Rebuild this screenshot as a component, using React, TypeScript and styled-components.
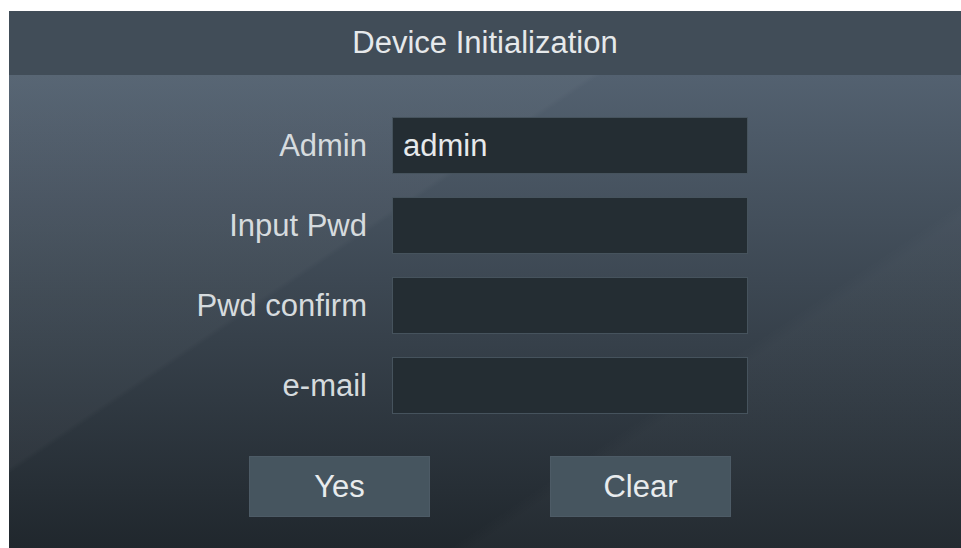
import React, { useState } from 'react';
import styled, { createGlobalStyle } from 'styled-components';

const GlobalStyle = createGlobalStyle`
  html,
  body {
    margin: 0;
    padding: 0;
    background: #ffffff;
    overflow: hidden;
  }
  body {
    font-family: 'Liberation Sans', Arial, sans-serif;
  }
`;

const StyledPanel = styled.div`
  margin: 11px 0 0 9px;
  height: 537px;
  display: flex;
  flex-direction: column;
`;

const StyledHeader = styled.div`
  height: 64px;
  flex-shrink: 0;
  display: flex;
  align-items: center;
  justify-content: center;
  background-color: #414d58;
  color: #e6e9eb;
  font-size: 31px;
`;

const StyledBody = styled.div`
  flex: 1;
  padding-top: 42px;
  box-sizing: border-box;
  /* angled sheen on top of the dark vertical fade */
  background:
    linear-gradient(
      146deg,
      rgba(255, 255, 255, 0.03) 0%,
      rgba(255, 255, 255, 0.03) 35.2%,
      rgba(255, 255, 255, 0) 35.8%,
      rgba(255, 255, 255, 0) 69%,
      rgba(255, 255, 255, 0.02) 70.5%
    ),
    linear-gradient(to bottom, #536170 0%, #20272d 100%);
`;

const StyledForm = styled.div`
  display: grid;
  grid-template-columns: 358px 356px;
  grid-auto-rows: 57px;
  column-gap: 25px;
  row-gap: 23px;
`;

const StyledLabel = styled.label`
  display: flex;
  align-items: center;
  justify-content: flex-end;
  color: #d6dbde;
  font-size: 31px;
  white-space: nowrap;
`;

const StyledInput = styled.input`
  box-sizing: border-box;
  width: 100%;
  height: 100%;
  margin: 0;
  padding: 0 10px;
  border: 1px solid #46535d;
  background-color: #242d33;
  color: #e6e9eb;
  font-family: 'Liberation Sans', Arial, sans-serif;
  font-size: 31px;
  outline: none;
`;

const StyledButtons = styled.div`
  display: flex;
  gap: 120px;
  padding-left: 240px;
  margin-top: 42px;
`;

const StyledButton = styled.button`
  width: 181px;
  height: 61px;
  margin: 0;
  padding: 0;
  border: 1px solid #4d5b66;
  background-color: #46555f;
  color: #e8ebed;
  font-family: 'Liberation Sans', Arial, sans-serif;
  font-size: 31px;
  cursor: pointer;
  &:hover {
    background-color: #50606b;
  }
`;

const fields = [
  { key: 'admin', label: 'Admin', type: 'text' },
  { key: 'pwd', label: 'Input Pwd', type: 'password' },
  { key: 'confirm', label: 'Pwd confirm', type: 'password' },
  { key: 'email', label: 'e-mail', type: 'text' },
];

const initial = { admin: 'admin', pwd: '', confirm: '', email: '' };

const App = () => {
  const [values, setValues] = useState<Record<string, string>>(initial);

  return (
    <>
      <GlobalStyle />
      <StyledPanel>
        <StyledHeader>Device Initialization</StyledHeader>
        <StyledBody>
          <StyledForm>
            {fields.map((f) => (
              <React.Fragment key={f.key}>
                <StyledLabel htmlFor={f.key}>{f.label}</StyledLabel>
                <StyledInput
                  id={f.key}
                  type={f.type}
                  value={values[f.key]}
                  onChange={(e) =>
                    setValues({ ...values, [f.key]: e.target.value })
                  }
                />
              </React.Fragment>
            ))}
          </StyledForm>
          <StyledButtons>
            <StyledButton>Yes</StyledButton>
            <StyledButton
              onClick={() => setValues({ admin: '', pwd: '', confirm: '', email: '' })}
            >
              Clear
            </StyledButton>
          </StyledButtons>
        </StyledBody>
      </StyledPanel>
    </>
  );
};

export default App;
